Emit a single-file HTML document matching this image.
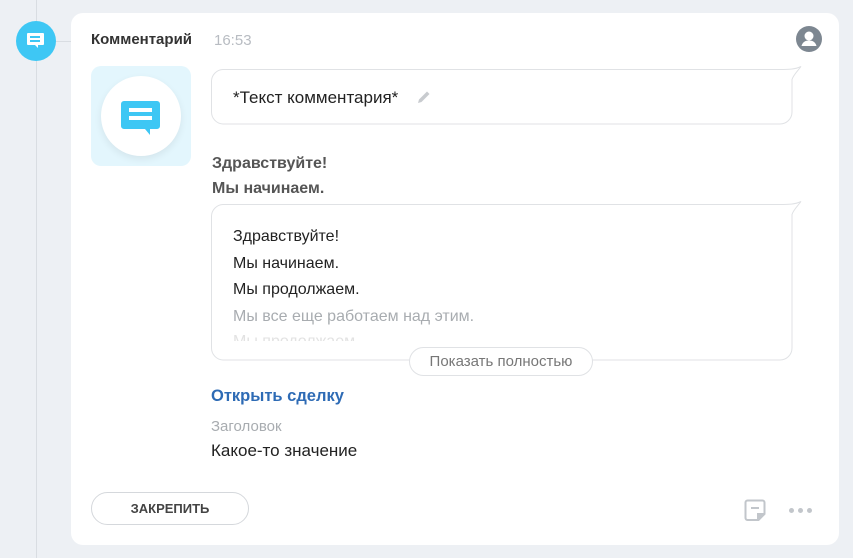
<!DOCTYPE html>
<html><head><meta charset="utf-8"><style>
*{margin:0;padding:0;box-sizing:border-box}
body{width:853px;height:558px;background:#edf0f4;font-family:"Liberation Sans",sans-serif;position:relative;overflow:hidden}
.a{position:absolute}
.card{left:71px;top:13px;width:768px;height:532px;background:#fff;border-radius:12px}
.t{white-space:nowrap}
</style></head><body>
<div class="a" style="left:36px;top:0;width:1px;height:558px;background:#d9dde2"></div>
<div class="a" style="left:56px;top:41px;width:15px;height:1px;background:#d9dde2"></div>
<div class="a" style="left:16px;top:21px;width:40px;height:40px;border-radius:50%;background:#3ec7f4"></div>
<svg class="a" style="left:26px;top:32px" width="20" height="20" viewBox="0 0 20 20"><path d="M2 1h15a1 1 0 0 1 1 1v10a1 1 0 0 1-1 1h-5v3l-3-3H2a1 1 0 0 1-1-1V2a1 1 0 0 1 1-1z" fill="#fff"/><rect x="4" y="4" width="10" height="2" fill="#3ec7f4"/><rect x="4" y="8" width="10" height="2" fill="#3ec7f4"/></svg>
<div class="a card"></div>
<div class="a t" style="left:91px;top:31px;font-size:15px;font-weight:bold;color:#333">Комментарий</div>
<div class="a t" style="left:214px;top:32px;font-size:15px;color:#b8bcc2">16:53</div>
<svg class="a" style="left:796px;top:26px" width="26" height="26" viewBox="0 0 26 26"><circle cx="13" cy="13" r="13" fill="#7d8791"/><circle cx="13" cy="10" r="4.5" fill="#fff"/><path d="M5.5 20c1-4 4-5.5 7.5-5.5s6.5 1.5 7.5 5.5z" fill="#fff"/></svg>
<div class="a" style="left:91px;top:66px;width:100px;height:100px;border-radius:10px;background:#e3f6fd"></div>
<div class="a" style="left:101px;top:76px;width:80px;height:80px;border-radius:50%;background:#fff;box-shadow:0 3px 8px rgba(0,0,0,.07)"></div>
<svg class="a" style="left:121px;top:100px" width="40" height="38" viewBox="0 0 40 38"><path d="M3 1h33a3 3 0 0 1 3 3v22a3 3 0 0 1-3 3h-7v6l-5-6H3a3 3 0 0 1-3-3V4a3 3 0 0 1 3-3z" fill="#3ec7f4"/><rect x="8" y="8" width="23" height="4" fill="#fff"/><rect x="8" y="16" width="23" height="4" fill="#fff"/></svg>
<svg class="a" style="left:210px;top:64px" width="596" height="300" viewBox="0 0 596 300">
<path d="M13 5.5H570c8 0 15 0 21-3c-3 4-8 9-9 13V48a12 12 0 0 1-12 12H13A12 12 0 0 1 1.5 48V17A12 12 0 0 1 13 5.5z" fill="#fff" stroke="#e0e2e5"/>
<path d="M13 140.5H570c8 0 15 0 21-3c-3 4-8 9-9 13V284a12 12 0 0 1-12 12H13A12 12 0 0 1 1.5 284V152A12 12 0 0 1 13 140.5z" fill="#fff" stroke="#e0e2e5"/>
</svg>
<div class="a t" style="left:233px;top:88px;font-size:17px;color:#222">*Текст комментария*</div>
<svg class="a" style="left:416px;top:89px" width="16" height="16" viewBox="0 0 16 16"><path d="M2 14l1-3.5 8-8 2.5 2.5-8 8z" fill="#c8cbcf"/></svg>
<div class="a t" style="left:212px;top:151px;font-size:16px;font-weight:bold;color:#555;line-height:25px">Здравствуйте!<br>Мы начинаем.</div>
<div class="a t" style="left:233px;top:224px;font-size:16px;line-height:26.5px;color:#222">Здравствуйте!<br>Мы начинаем.<br>Мы продолжаем.<br><span style="color:#a8acb0">Мы все еще работаем над этим.</span></div>
<div class="a" style="left:233px;top:334px;height:7px;overflow:hidden;font-size:16px;color:#e2e2e2;line-height:26px;white-space:nowrap"><div style="margin-top:-5px">Мы продолжаем</div></div>
<div class="a t" style="left:409px;top:347px;width:184px;height:29px;border:1px solid #e0e2e5;border-radius:15px;background:#fff;font-size:15px;color:#777;text-align:center;line-height:27px">Показать полностью</div>
<div class="a t" style="left:211px;top:387px;font-size:16.5px;font-weight:bold;color:#2e6bb5">Открыть сделку</div>
<div class="a t" style="left:211px;top:418px;font-size:15px;color:#a8acb0">Заголовок</div>
<div class="a t" style="left:211px;top:441px;font-size:17px;color:#222">Какое-то значение</div>
<div class="a t" style="left:91px;top:492px;width:158px;height:33px;border:1px solid #d5d8dc;border-radius:17px;font-size:13px;font-weight:bold;color:#444;text-align:center;line-height:31px">ЗАКРЕПИТЬ</div>
<svg class="a" style="left:744px;top:499px" width="24" height="24" viewBox="0 0 24 24"><path d="M3.5 1.5h15a2 2 0 0 1 2 2V15l-6 6H3.5a2 2 0 0 1-2-2V3.5a2 2 0 0 1 2-2z" fill="none" stroke="#c2c6cb" stroke-width="2"/><path d="M14 21v-6h6" fill="#c2c6cb" stroke="#c2c6cb" stroke-width="2"/><rect x="7" y="8" width="8" height="2" fill="#c2c6cb"/></svg>
<div class="a" style="left:789px;top:508px;width:5px;height:5px;border-radius:50%;background:#c2c6cb"></div>
<div class="a" style="left:798px;top:508px;width:5px;height:5px;border-radius:50%;background:#c2c6cb"></div>
<div class="a" style="left:807px;top:508px;width:5px;height:5px;border-radius:50%;background:#c2c6cb"></div>
</body></html>
